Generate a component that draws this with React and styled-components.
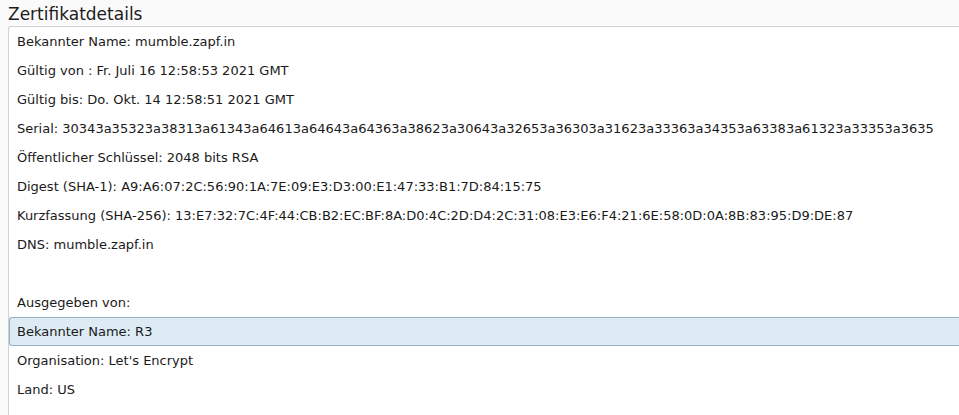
import styled, { createGlobalStyle } from "styled-components"

const Global = createGlobalStyle`
  html, body {
    margin: 0;
    background: #fafafa;
    overflow: hidden;
  }
  body {
    font-family: "DejaVu Sans", sans-serif;
    color: #1a1a1a;
  }
`

const Page = styled.div`
  width: 980px;
  padding: 2px 0 0 8px;
`

const Title = styled.h2`
  margin: 0;
  font-size: 17px;
  font-weight: normal;
  line-height: 24px;
  height: 24px;
  color: #1c1c1c;
`

const List = styled.div`
  background: #ffffff;
  border: 1px solid #d2d2d2;
  border-right: none;
  border-bottom: none;
  border-radius: 3px 0 0 0;
  height: 400px;
  display: flex;
  flex-direction: column;
`

const Row = styled.div`
  height: 29px;
  box-sizing: border-box;
  display: flex;
  align-items: center;
  padding: 0 7px;
  font-size: 13px;
  white-space: nowrap;
  border: 1px solid ${p => (p.$selected ? "#97b2c6" : "transparent")};
  border-right: none;
  border-radius: 3px 0 0 3px;
  background: ${p => (p.$selected ? "#dcebf4" : "transparent")};
`

const rows = [
  "Bekannter Name: mumble.zapf.in",
  "Gültig von : Fr. Juli 16 12:58:53 2021 GMT",
  "Gültig bis: Do. Okt. 14 12:58:51 2021 GMT",
  "Serial: 30343a35323a38313a61343a64613a64643a64363a38623a30643a32653a36303a31623a33363a34353a63383a61323a33353a3635",
  "Öffentlicher Schlüssel: 2048 bits RSA",
  "Digest (SHA-1): A9:A6:07:2C:56:90:1A:7E:09:E3:D3:00:E1:47:33:B1:7D:84:15:75",
  "Kurzfassung (SHA-256): 13:E7:32:7C:4F:44:CB:B2:EC:BF:8A:D0:4C:2D:D4:2C:31:08:E3:E6:F4:21:6E:58:0D:0A:8B:83:95:D9:DE:87",
  "DNS: mumble.zapf.in",
  "",
  "Ausgegeben von:",
  "Bekannter Name: R3",
  "Organisation: Let's Encrypt",
  "Land: US",
]

export default function App() {
  return (
    <Page>
      <Global />
      <Title>Zertifikatdetails</Title>
      <List>
        {rows.map((text, i) => (
          <Row key={i} $selected={i === 10}>
            {text}
          </Row>
        ))}
      </List>
    </Page>
  )
}
